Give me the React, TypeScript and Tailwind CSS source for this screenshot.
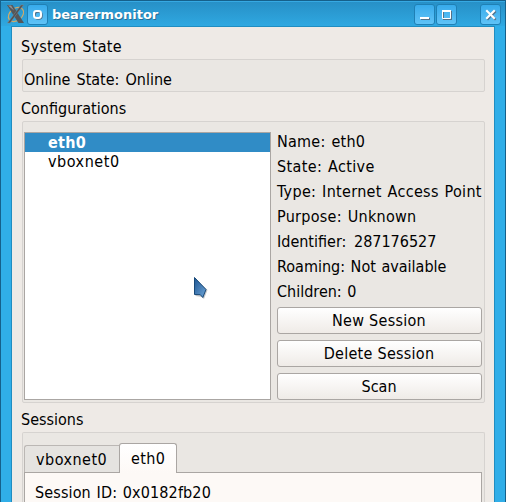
import type { ReactNode } from 'react';

const details = [
  { text: 'Name: eth0', spacing: 'tracking-[0.25px]' },
  { text: 'State: Active', spacing: 'tracking-[0.36px]' },
  { text: 'Type: Internet Access Point', spacing: 'tracking-[0.31px]' },
  { text: 'Purpose: Unknown', spacing: 'tracking-[0.28px]' },
  { text: 'Identifier: 287176527', spacing: '[word-spacing:3px]' },
  { text: 'Roaming: Not available', spacing: '[word-spacing:1px]' },
  { text: 'Children: 0', spacing: '[word-spacing:1px]' },
];

function TitleButton({ label, className = '', children }: { label: string; className?: string; children: ReactNode }) {
  return (
    <button
      aria-label={label}
      className={`h-[21px] w-[21px] shrink-0 rounded-[3px] border border-[#1f80b5] bg-linear-to-b from-[#37abeb] to-[#5fc3f7] ${className}`}
    >
      <svg width="19" height="19" viewBox="0 0 19 19" fill="none">
        {children}
      </svg>
    </button>
  );
}

function PushButton({ children, spacing }: { children: string; spacing: string }) {
  return (
    <button
      className={`h-[27px] w-[205px] rounded-[3px] border border-[#aaa6a3] bg-linear-to-b from-white to-[#efebe7] pr-[1px] text-center leading-[25px] ${spacing}`}
    >
      {children}
    </button>
  );
}

export default function App() {
  return (
    <div className="flex h-[502px] w-[506px] flex-col overflow-hidden border-x border-t border-[#15608b] bg-[#30aee8] font-['DejaVu_Sans_Condensed','DejaVu_Sans',sans-serif] text-[16px] text-black [font-stretch:condensed] [word-spacing:1px]">
      <header className="flex h-[25px] shrink-0 items-start border-t border-[#36a9e3] bg-linear-to-b from-[#2790c7] to-[#2fa8e1] pt-[2px] pl-[5px]">
        <svg className="shrink-0" width="21" height="21" viewBox="0 0 21 21" fill="none">
          <ellipse cx="10" cy="10.5" rx="8.5" ry="6" stroke="#d0aa68" strokeWidth="1.2" transform="rotate(-38 10 10.5)" />
          <path d="M1 1h5.5l11.5 18h-5.5z" fill="#55575a" />
          <path d="M15 1h2.5L4 19H1.5z" fill="#505255" stroke="#888" strokeWidth=".5" />
          <path d="M2 1.5h3l3 5z" fill="#929497" />
        </svg>
        <TitleButton label="Window menu">
          <rect x="7" y="7" width="7" height="7" rx="3" stroke="#52718a" strokeWidth="1.5" />
          <rect x="6" y="6" width="7" height="7" rx="2.4" stroke="white" strokeWidth="2" />
        </TitleButton>
        <h1 className="ml-[4px] w-[362px] font-['DejaVu_Sans',sans-serif] text-[13px] leading-[22px] font-bold text-white [font-stretch:normal] [text-shadow:1px_1px_#287097]">
          bearermonitor
        </h1>
        <TitleButton label="Minimize">
          <path d="M6 14h9" stroke="#52718a" strokeWidth="2" />
          <path d="M5 13h9" stroke="white" strokeWidth="2" />
        </TitleButton>
        <TitleButton label="Maximize" className="ml-[1px]">
          <rect x="6.5" y="6.5" width="8" height="8" stroke="#52718a" />
          <path d="M5.5 5v8.5h8V6" stroke="white" />
          <path d="M5 6h9" stroke="white" strokeWidth="2" />
        </TitleButton>
        <TitleButton label="Close" className="ml-[23px]">
          <path d="M7 7l7 7M14 7l-7 7" stroke="#52718a" strokeWidth="2" strokeLinecap="square" />
          <path d="M6 6l7 7M13 6l-7 7" stroke="white" strokeWidth="2.1" strokeLinecap="square" />
        </TitleButton>
      </header>

      <main className="mx-[10px] flex w-[484px] flex-1 flex-col border-x border-t border-[#208dc1] bg-[#eeeae6] pr-[9px] pl-[9px]">
        <h2 className="mt-[9px] h-[23px] leading-[22px] tracking-[0.3px]">System State</h2>
        <section className="ml-[1px] h-[33px] w-[463px] rounded-[2px] border border-[#d6d3d0] bg-[#eae7e3] pl-[1px] leading-[39px] [word-spacing:1.5px]">
          Online State: Online
        </section>

        <h2 className="mt-[5px] h-[22px] leading-[24px]">Configurations</h2>
        <section className="mt-[2px] ml-[1px] flex h-[282px] w-[463px] rounded-[2px] border border-[#d6d3d0] bg-[#eae7e3] pt-[10px] pl-[1px]">
          <ul className="h-[268px] w-[247px] border border-[#aaa6a3] bg-white leading-[20px]">
            <li className="h-[19px] bg-[#308cc6] pl-[23px] font-bold tracking-[0.3px] text-white">eth0</li>
            <li className="h-[19px] pl-[23px] tracking-[0.55px]">vboxnet0</li>
          </ul>
          <div className="ml-[6px] flex w-[205px] flex-col">
            {details.map((d) => (
              <p key={d.text} className={`h-[25px] leading-[20px] whitespace-nowrap ${d.spacing}`}>
                {d.text}
              </p>
            ))}
            <div className="flex flex-col gap-[6px]">
              <PushButton spacing="tracking-[0.28px]">New Session</PushButton>
              <PushButton spacing="tracking-[0.28px]">Delete Session</PushButton>
              <PushButton spacing="tracking-normal">Scan</PushButton>
            </div>
          </div>
        </section>

        <h2 className="mt-[5px] h-[22px] leading-[24px]">Sessions</h2>
        <section className="mt-[2px] ml-[1px] h-[70px] w-[463px] rounded-t-[2px] border border-b-0 border-[#d6d3d0] bg-[#eae7e3] pt-[10px] pl-[1px]">
          <div className="flex items-end">
            <div className="h-[27px] w-[95px] rounded-tl-[3px] border border-r-0 border-b-0 border-[#bbb7b4] bg-[#e5e3e0] pl-[11px] leading-[28px] tracking-[0.5px]">
              vboxnet0
            </div>
            <div className="relative -mb-px h-[30px] w-[58px] rounded-t-[3px] border border-b-0 border-[#aaa6a3] bg-linear-to-b from-white to-[#fdf9f6] pl-[11px] leading-[30px] tracking-[0.4px]">
              eth0
            </div>
          </div>
          <div className="h-[31px] w-[458px] border border-b-0 border-[#aaa6a3] bg-[#fdf9f6] pl-[10px] leading-[40px] tracking-[0.13px]">
            Session ID: 0x0182fb20
          </div>
        </section>
      </main>

      <svg className="absolute top-[276px] left-[193px]" width="18" height="25" viewBox="0 0 18 25">
        <defs>
          <linearGradient id="pointer" x1="0" y1="0" x2="1" y2="1">
            <stop offset="0" stopColor="#1d5592" />
            <stop offset="1" stopColor="#6fa6d8" />
          </linearGradient>
        </defs>
        <path d="M2.5 3l12 11-3.5 9-2.5-2-6-1z" fill="#777" opacity=".4" />
        <path d="M1.5 1.5l11.5 12-3.2 8-2.5-2.8-5.8-.2z" fill="url(#pointer)" stroke="#174878" />
      </svg>
    </div>
  );
}
